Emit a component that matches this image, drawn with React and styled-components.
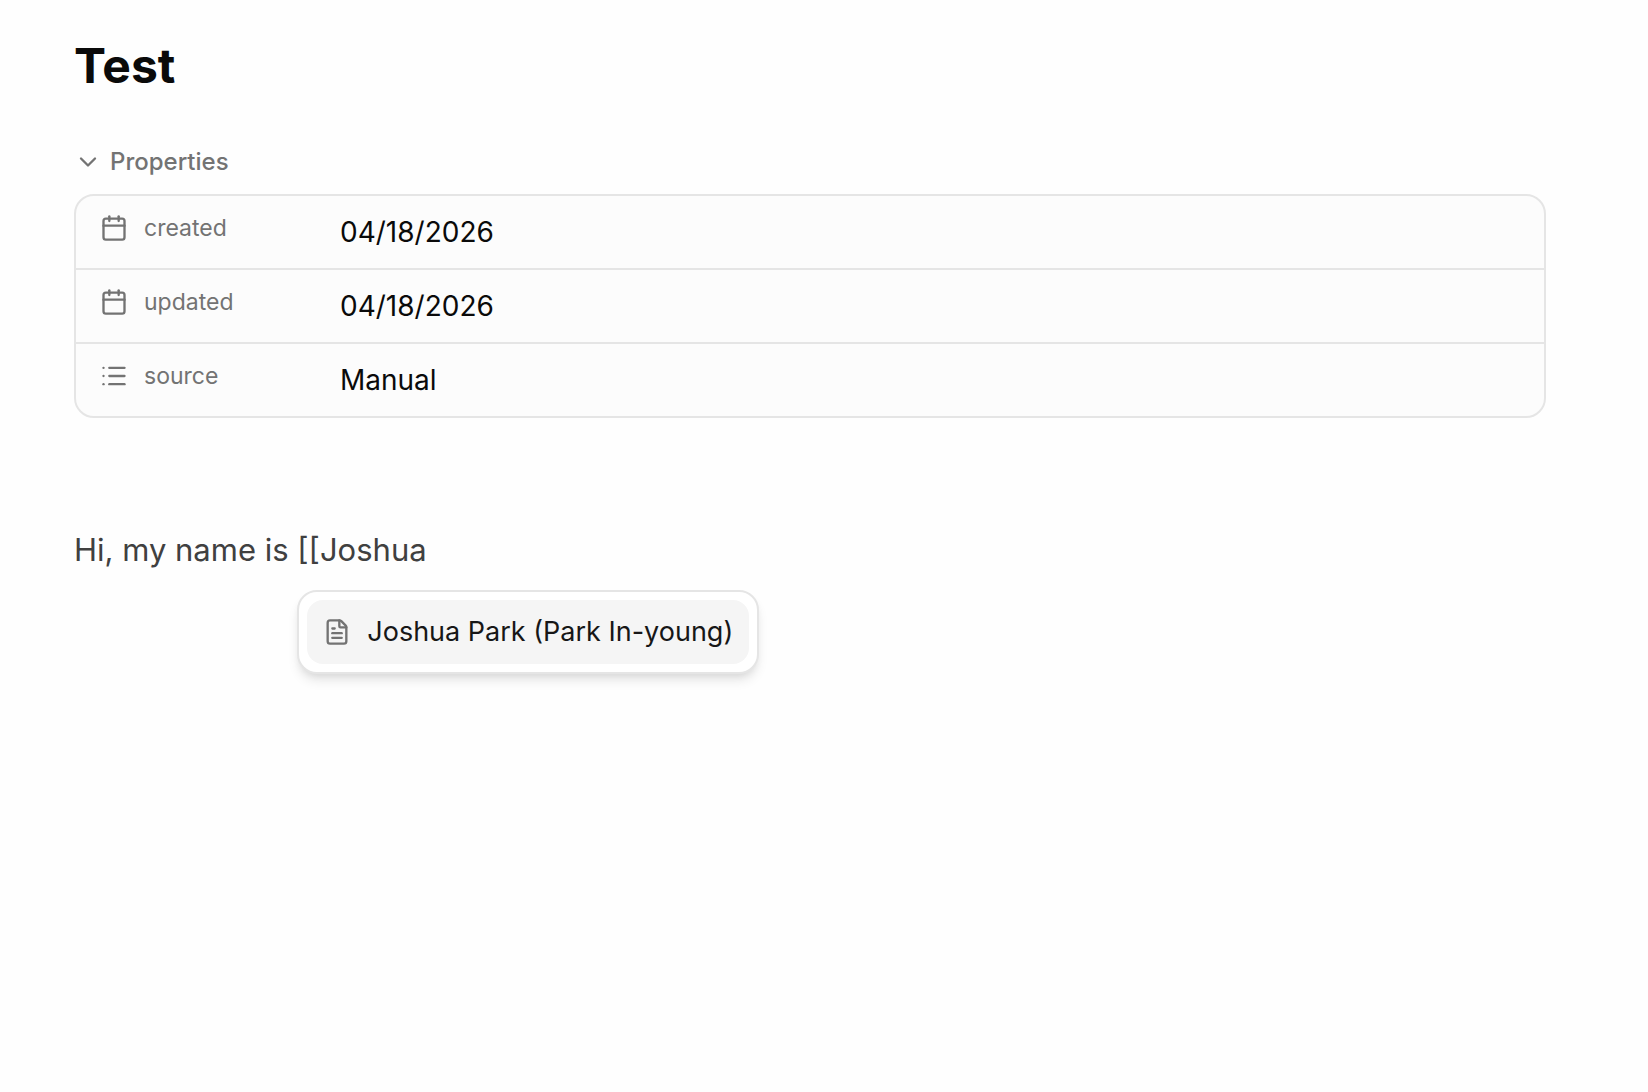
import React, { useState } from 'react'
import styled, { createGlobalStyle } from 'styled-components'
import { Calendar, ChevronDown, FileText, List } from 'lucide-react'

const GlobalStyle = createGlobalStyle`
  * {
    box-sizing: border-box;
  }
  body {
    margin: 0;
    background: #fefefe;
    color: #0a0a0a;
    font-family: Inter, "Liberation Sans", sans-serif;
  }
  button, input {
    font-family: inherit;
  }
`

const Page = styled.main`
  min-height: 100vh;
  padding: 36px 102px 36px 74px;
`

const Title = styled.h1`
  margin: 0;
  font-size: 48px;
  line-height: 60px;
  font-weight: 700;
`

const Toggle = styled.button`
  display: flex;
  align-items: center;
  gap: 8px;
  margin: 48px 0 0;
  padding: 0;
  height: 36px;
  border: none;
  background: transparent;
  color: #737373;
  font-size: 24px;
  line-height: 32px;
  font-weight: 500;
  cursor: pointer;
  svg {
    transform: rotate(${({ $open }) => ($open ? '0deg' : '-90deg')});
  }
`

const Card = styled.div`
  margin-top: 14px;
  border: 2px solid #e5e5e5;
  border-radius: 20px;
  background: #fcfcfc;
  overflow: hidden;
`

const Row = styled.div`
  display: flex;
  align-items: flex-start;
  padding: 16px 24px;
  & + & {
    border-top: 2px solid #e5e5e5;
  }
`

const Name = styled.label`
  display: flex;
  align-items: center;
  gap: 16px;
  flex: 0 0 240px;
  color: #737373;
  font-size: 23px;
  line-height: 32px;
`

const Value = styled.input`
  flex: 1;
  min-width: 0;
  height: 40px;
  padding: 0;
  border: none;
  outline: none;
  background: transparent;
  color: #0a0a0a;
  font-size: 28px;
  line-height: 40px;
`

const Body = styled.div`
  margin-top: 104px;
  color: #404040;
  font-size: 31px;
  line-height: 56px;
`

const Mention = styled.span`
  position: relative;
  display: inline-block;
`

const Menu = styled.div`
  position: absolute;
  top: 100%;
  left: 0;
  margin-top: 12px;
  padding: 8px;
  border: 2px solid #e5e5e5;
  border-radius: 20px;
  background: #fff;
  box-shadow: 0 8px 12px -2px rgba(0, 0, 0, 0.1), 0 4px 8px -4px rgba(0, 0, 0, 0.1);
`

const MenuItem = styled.button`
  display: flex;
  align-items: center;
  gap: 16px;
  padding: 12px 16px;
  border: none;
  border-radius: 16px;
  background: #f5f5f5;
  color: #171717;
  font-size: 27px;
  line-height: 40px;
  white-space: nowrap;
  cursor: pointer;
  svg {
    flex: none;
    color: #737373;
  }
`

const properties = [
  { name: 'created', value: '04/18/2026', icon: Calendar },
  { name: 'updated', value: '04/18/2026', icon: Calendar },
  { name: 'source', value: 'Manual', icon: List },
]

const people = ['Joshua Park (Park In-young)']

const Properties = () => {
  const [open, setOpen] = useState(true)

  return (
    <section>
      <Toggle $open={open} aria-expanded={open} onClick={() => setOpen(!open)}>
        <ChevronDown size={28} />
        Properties
      </Toggle>
      {open && (
        <Card>
          {properties.map(({ name, value, icon: Icon }) => (
            <Row key={name}>
              <Name htmlFor={name}>
                <Icon size={28} />
                {name}
              </Name>
              <Value id={name} defaultValue={value} />
            </Row>
          ))}
        </Card>
      )}
    </section>
  )
}

export default function App() {
  return (
    <Page>
      <GlobalStyle />
      <Title>Test</Title>
      <Properties />
      <Body>
        Hi, my name is{' '}
        <Mention>
          [[Joshua
          <Menu>
            {people.map((person) => (
              <MenuItem key={person}>
                <FileText size={28} />
                {person}
              </MenuItem>
            ))}
          </Menu>
        </Mention>
      </Body>
    </Page>
  )
}
